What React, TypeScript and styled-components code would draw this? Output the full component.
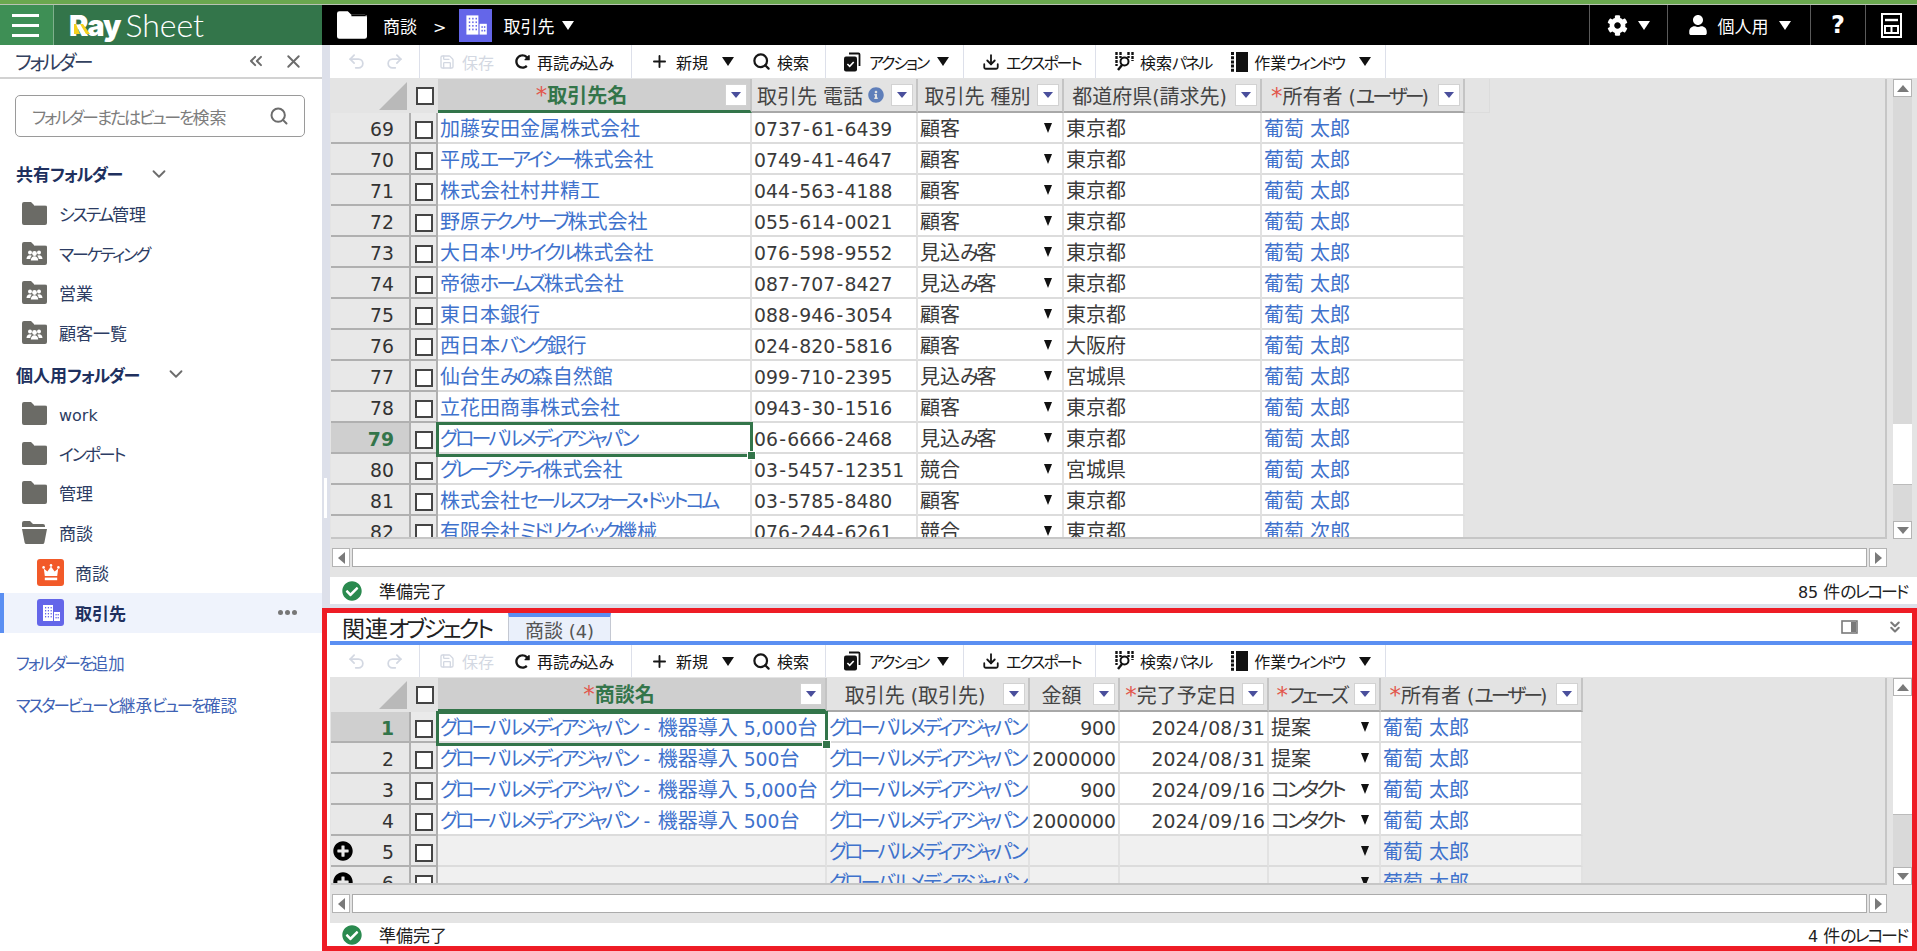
import React from 'react';
import styled, { createGlobalStyle, css } from 'styled-components';
import { ChevronDown, ChevronsLeft, ChevronsDown, X, Search, Plus, Download, Undo2, Redo2, Save } from 'lucide-react';
import { FaCog, FaUser, FaRedoAlt, FaCheckCircle, FaPlusCircle, FaInfoCircle } from 'react-icons/fa';

const JP = '"Noto Sans CJK JP", "Noto Sans", sans-serif';
const GREEN = '#33754a';
const LINK = '#3f72cc';
const BLUE_LINE = '#5b8ff2';

const GlobalStyle = createGlobalStyle`
	html, body {
		margin: 0;
		height: 951px;
		overflow: hidden;
		background: #ffffff;
	}
	body {
		font-family: ${JP};
		font-feature-settings: 'palt';
		color: #333333;
	}
	* {
		box-sizing: border-box;
	}
`;

/* Meiryo UI has narrow kana and Verdana-like latin, so runs are split to get close to it */
const Kana = styled.span`
	letter-spacing: var(--kana-spacing, -0.13em);
`;
const Latin = styled.span`
	font-family: 'DejaVu Sans', sans-serif;
	font-size: 0.94em;
	white-space: pre;
`;
const Punct = styled.span`
	margin: 0 0.07em;
`;

const Txt = ({ children }: { children: string }) => {
	const runs = children.match(/[\u3040-\u30FF]+|[\x20-\x7E]+|[^\u3040-\u30FF\x20-\x7E]+/g) || [];
	return (
		<span>
			{runs.map((run, i) => {
				if (/^[\u3040-\u30FF]/.test(run)) return <Kana key={i}>{run}</Kana>;
				if (/^[\x20-\x7E]/.test(run))
					return (
						<Latin key={i}>
							{run.split(/([-/])/).map((part, j) => (part === '-' || part === '/' ? <Punct key={j}>{part}</Punct> : part))}
						</Latin>
					);
				return <span key={i}>{run}</span>;
			})}
		</span>
	);
};

const Page = styled.div`
	width: 1917px;
	height: 951px;
	display: flex;
	flex-direction: column;
	overflow: hidden;
`;

const TopStripe = styled.div`
	height: 5px;
	flex: none;
	background: #6aa84f;
	border-bottom: 1px solid #b9c2b4;
`;

const Header = styled.header`
	height: 40px;
	flex: none;
	display: flex;
	background: #000000;
	color: #ffffff;
	font-size: 17px;
`;

const Hamburger = styled.div`
	width: 54px;
	display: flex;
	flex-direction: column;
	justify-content: center;
	gap: 7px;
	padding: 0 14px 0 12px;
	background: #3e8f55;
	border-right: 1px solid #7fb08d;
`;

const HamburgerBar = styled.span`
	display: block;
	height: 3px;
	background: #ffffff;
`;

const LogoArea = styled.div`
	width: 268px;
	display: flex;
	align-items: center;
	padding-left: 15px;
	background: ${GREEN};
`;

const LogoRay = styled.span`
	position: relative;
	font-family: Inter, sans-serif;
	font-weight: 900;
	font-size: 29px;
	line-height: 1;
	letter-spacing: -1px;
`;

const LogoWedge = styled.svg`
	position: absolute;
	left: 5px;
	top: 13px;
`;

const LogoSheet = styled.span`
	margin-left: 5px;
	font-family: Lato, sans-serif;
	font-weight: 300;
	font-size: 32px;
	line-height: 1;
`;

const Crumbs = styled.div`
	display: flex;
	align-items: center;
	padding-left: 15px;
`;

const CrumbText = styled.span<{ $ml: number }>`
	margin-left: ${(p) => p.$ml}px;
`;

const Tile = styled.span<{ $color: string; $size: number }>`
	flex: none;
	display: flex;
	align-items: center;
	justify-content: center;
	width: ${(p) => p.$size}px;
	height: ${(p) => p.$size}px;
	border-radius: 3px;
	background: ${(p) => p.$color};
	color: #ffffff;
`;

const CrumbTile = styled(Tile)`
	margin-left: 13px;
	border-radius: 0;
`;

const HeaderRight = styled.div`
	margin-left: auto;
	display: flex;
`;

const HeaderButton = styled.div<{ $width: number }>`
	width: ${(p) => p.$width}px;
	display: flex;
	align-items: center;
	justify-content: center;
	gap: 10px;
	border-left: 1px solid #5a5a5a;
`;

const HelpMark = styled.span`
	font-family: 'DejaVu Sans', sans-serif;
	font-size: 24px;
	font-weight: 700;
`;

const Tri = styled.span<{ $dir?: 'up' | 'down' | 'left' | 'right'; $w: number; $h: number; $color: string; $ml?: number }>`
	flex: none;
	display: inline-block;
	width: 0;
	height: 0;
	margin-left: ${(p) => p.$ml ?? 0}px;
	${({ $dir = 'down', $w, $h, $color }) => {
		if ($dir === 'down')
			return css`
				border-left: ${$w / 2}px solid transparent;
				border-right: ${$w / 2}px solid transparent;
				border-top: ${$h}px solid ${$color};
			`;
		if ($dir === 'up')
			return css`
				border-left: ${$w / 2}px solid transparent;
				border-right: ${$w / 2}px solid transparent;
				border-bottom: ${$h}px solid ${$color};
			`;
		if ($dir === 'left')
			return css`
				border-top: ${$w / 2}px solid transparent;
				border-bottom: ${$w / 2}px solid transparent;
				border-right: ${$h}px solid ${$color};
			`;
		return css`
			border-top: ${$w / 2}px solid transparent;
			border-bottom: ${$w / 2}px solid transparent;
			border-left: ${$h}px solid ${$color};
		`;
	}}
`;

const Body = styled.div`
	position: relative;
	flex: 1;
	display: flex;
	min-height: 0;
`;

const Sidebar = styled.aside`
	width: 322px;
	flex: none;
	background: #ffffff;
	color: #2c3c63;
	font-size: 17px;
`;

const SideTitle = styled.div`
	height: 34px;
	display: flex;
	align-items: center;
	padding: 0 18px 0 15px;
	border-bottom: 2px solid #d2d2d2;
	font-size: 20px;
	color: #33415f;
`;

const SideTitleText = styled.span`
	flex: 1;
`;

const SideTitleIcons = styled.span`
	display: flex;
	align-items: center;
	gap: 17px;
	color: #6c6c6c;
`;

const SearchBox = styled.div`
	height: 42px;
	margin: 16px 17px 17px 15px;
	display: flex;
	align-items: center;
	padding: 0 15px 0 16px;
	border: 1px solid #9a9a9a;
	border-radius: 5px;
	color: #7d7d7d;
`;

const SearchHint = styled.span`
	flex: 1;
`;

const PersonalSection = styled.div`
	--row-lift: 3px;
	margin-top: 3.5px;
`;

const SectionHead = styled.div`
	--kana-spacing: -0.08em;
	height: 39.8px;
	display: flex;
	align-items: center;
	gap: 26px;
	padding: 0 0 var(--row-lift, 0) 16px;
	font-weight: 700;
	color: #20305e;
`;

const FolderRow = styled.div<{ $nested?: boolean; $active?: boolean }>`
	height: 39.6px;
	display: flex;
	align-items: center;
	gap: ${(p) => (p.$nested ? 11 : 12)}px;
	padding-left: ${(p) => (p.$nested ? 37 : 22)}px;
	padding-bottom: var(--row-lift, 0);
	${(p) =>
		p.$active &&
		css`
			background: #eff3fc;
			border-left: 4px solid ${BLUE_LINE};
			padding-left: 33px;
			padding-bottom: 1px;
			font-weight: 700;
			color: #20305e;
		`}
`;

const RowMenu = styled.span`
	margin-left: auto;
	margin-right: 25px;
	display: flex;
	gap: 2px;
`;

const RowMenuDot = styled.i`
	width: 5px;
	height: 5px;
	border-radius: 50%;
	background: #777777;
`;

const SideLink = styled.div<{ $first?: boolean }>`
	height: 42px;
	display: flex;
	align-items: center;
	padding-left: 16px;
	margin-top: ${(p) => (p.$first ? 9 : 0)}px;
	color: #3e62b4;
	font-size: 16.5px;
`;

const RightColumn = styled.div`
	flex: 1;
	min-width: 0;
	display: flex;
	flex-direction: column;
	background: #dde0ea;
`;

const TopPane = styled.section`
	height: 559px;
	flex: none;
	margin: 0 0 4px 8px;
	display: flex;
	flex-direction: column;
	background: #ffffff;
`;

const SplitterGrip = styled.div`
	position: absolute;
	left: 324px;
	top: 433px;
	width: 3px;
	height: 40px;
	background: #ffffff;
`;

const RelatedPane = styled.section`
	flex: 1;
	min-height: 0;
	display: flex;
	flex-direction: column;
	border: 5px solid #ee1c25;
	padding-left: 3px;
	background: #ffffff;
`;

const TabRow = styled.div`
	height: 32px;
	flex: none;
	display: flex;
	align-items: stretch;
	padding-left: 12px;
	border-bottom: 4px solid ${BLUE_LINE};
`;

const TabTitle = styled.div`
	width: 166px;
	display: flex;
	align-items: center;
	font-size: 23px;
	color: #222222;
`;

const Tab = styled.div`
	width: 103px;
	display: flex;
	align-items: center;
	justify-content: center;
	border-top: 4px solid ${BLUE_LINE};
	border-left: 1px solid #c4c8d2;
	border-right: 1px solid #c4c8d2;
	background: #eaf0fb;
	color: #555555;
	font-size: 19px;
`;

const TabTools = styled.div`
	margin-left: auto;
	display: flex;
	align-items: center;
	gap: 28px;
	padding-right: 8px;
	color: #7a7a7a;
`;

const Toolbar = styled.div<{ $height: number }>`
	height: ${(p) => p.$height}px;
	flex: none;
	display: flex;
	background: #ffffff;
	font-size: 16px;
	color: #161616;
`;

const ToolGroup = styled.div<{ $width: number; $pad: number }>`
	width: ${(p) => p.$width}px;
	flex: none;
	display: flex;
	align-items: center;
	padding-left: ${(p) => p.$pad}px;
	border-right: 1px solid #dde0ea;
	white-space: nowrap;
`;

const ToolItem = styled.span<{ $ml?: number; $gap?: number; $disabled?: boolean }>`
	display: inline-flex;
	align-items: center;
	gap: ${(p) => p.$gap ?? 7}px;
	margin-left: ${(p) => p.$ml ?? 0}px;
	color: ${(p) => (p.$disabled ? '#d3d8e2' : 'inherit')};
`;

const GridArea = styled.div<{ $height: number; $narrow?: boolean }>`
	height: ${(p) => p.$height}px;
	flex: none;
	display: flex;
	flex-direction: column;
	padding: 1px ${(p) => (p.$narrow ? 0 : 5)}px 0 1px;
	background: #e4e4e4;
`;

const GridRow = styled.div`
	display: flex;
	flex: 1;
	min-height: 0;
`;

const Viewport = styled.div`
	--kana-spacing: -0.15em;
	flex: 1;
	min-width: 0;
	overflow: hidden;
	border-right: 2px solid #c6c6c6;
	border-bottom: 2px solid #c6c6c6;
	font-size: 20px;
	white-space: nowrap;
`;

const HeadRow = styled.div`
	display: flex;
	height: 34px;
`;

const Corner = styled.div`
	width: 80px;
	height: 34px;
	flex: none;
	display: flex;
	align-items: flex-end;
	justify-content: flex-end;
	padding: 0 4px 3px 0;
	background: #e4e4e4;
`;

const CheckHead = styled.div`
	width: 27px;
	flex: none;
	display: flex;
	align-items: center;
	justify-content: center;
	background: #e4e4e4;
`;

const Check = styled.span<{ $low?: boolean }>`
	display: block;
	width: 18px;
	height: 18px;
	margin-top: ${(p) => (p.$low ? 8 : 0)}px;
	margin-left: 1px;
	border: 2px solid #444444;
	background: #ffffff;
`;

const HeadCell = styled.div<{ $width: number; $active?: boolean }>`
	width: ${(p) => p.$width}px;
	flex: none;
	display: flex;
	align-items: center;
	padding-right: 3px;
	background: ${(p) => (p.$active ? '#cfcfcf' : '#e3e3e3')};
	border-right: 2px solid #c4c4c4;
	border-bottom: ${(p) => (p.$active ? `3px solid ${GREEN}` : '2px solid #a8a8a8')};
	color: ${(p) => (p.$active ? GREEN : '#444444')};
	font-weight: ${(p) => (p.$active ? 700 : 400)};
`;

const HeadLabel = styled.span`
	flex: 1;
	min-width: 0;
	text-align: center;
	overflow: hidden;
`;

const Star = styled.span`
	color: #e2574c;
	font-family: 'DejaVu Sans', sans-serif;
	font-size: 1.15em;
	font-weight: 400;
	line-height: 1;
`;

const InfoMark = styled.span`
	display: flex;
	margin-right: 7px;
	color: #5f7fba;
`;

const FilterButton = styled.span`
	flex: none;
	width: 22px;
	height: 22px;
	display: flex;
	align-items: center;
	justify-content: center;
	background: #ffffff;
	border: 1px solid #d2d2d2;
`;

const HeadFiller = styled.div`
	width: 25px;
	flex: none;
	border-right: 1px solid #dcdcdc;
	border-bottom: 1px solid #dcdcdc;
`;

const DataRow = styled.div`
	display: flex;
	height: 31px;
`;

const RowHead = styled.div<{ $active?: boolean }>`
	position: relative;
	width: 80px;
	flex: none;
	padding-right: 15px;
	text-align: right;
	line-height: 29px;
	background: ${(p) => (p.$active ? '#cfcfcf' : '#e8e8e8')};
	border-right: 2px solid #b0b0b0;
	border-bottom: 2px solid #b0b0b0;
	color: ${(p) => (p.$active ? GREEN : '#333333')};
	font-weight: ${(p) => (p.$active ? 700 : 400)};
`;

const AddMark = styled.span`
	position: absolute;
	left: 2px;
	top: 5px;
	display: flex;
	color: #000000;
`;

const CheckCell = styled.div`
	width: 27px;
	flex: none;
	display: flex;
	justify-content: center;
	background: #eaeaea;
	border-right: 2px solid #b0b0b0;
	border-bottom: 2px solid #b0b0b0;
`;

const Cell = styled.div<{ $width: number; $kind: string; $blank?: boolean; $selected?: boolean }>`
	position: relative;
	z-index: ${(p) => (p.$selected ? 2 : 0)};
	width: ${(p) => p.$width}px;
	flex: none;
	display: flex;
	align-items: center;
	padding: 0 2px;
	overflow: ${(p) => (p.$selected ? 'visible' : 'hidden')};
	background: ${(p) => (p.$blank ? '#f0f0f0' : '#ffffff')};
	border-right: 2px solid #e2e2e2;
	border-bottom: 2px solid #dcdcdc;
	color: ${(p) => (p.$kind === 'link' ? LINK : '#3a3a3a')};
	justify-content: ${(p) => (p.$kind === 'right' ? 'flex-end' : 'flex-start')};
`;

const SelectText = styled.span`
	flex: 1;
	min-width: 0;
`;

const SelectArrow = styled(Tri)`
	margin-right: 8px;
`;

const SelectionFrame = styled.span`
	position: absolute;
	left: -2px;
	top: -1px;
	right: -3px;
	bottom: -5px;
	border: 3px solid ${GREEN};
	pointer-events: none;
`;

const SelectionHandle = styled.span`
	position: absolute;
	right: -6px;
	bottom: -6px;
	width: 9px;
	height: 9px;
	background: ${GREEN};
	border: 1px solid #ffffff;
`;

const VScroll = styled.div`
	width: 25px;
	flex: none;
	display: flex;
	flex-direction: column;
	padding-left: 6px;
`;

const VTrack = styled.div`
	flex: 1;
	min-height: 0;
	display: flex;
	flex-direction: column;
	background: #d9d9d9;
`;

const Thumb = styled.div<{ $top: number; $height: number }>`
	margin-top: ${(p) => p.$top}px;
	height: ${(p) => p.$height}px;
	flex: none;
	background: #ffffff;
	border-bottom: 1px solid #bbbbbb;
`;

const ScrollButton = styled.span<{ $wide?: boolean }>`
	flex: none;
	width: ${(p) => (p.$wide ? 19 : 18)}px;
	height: ${(p) => (p.$wide ? 18 : 19)}px;
	display: flex;
	align-items: center;
	justify-content: center;
	background: #ffffff;
	border: 1px solid #b4b4b4;
`;

const HScroll = styled.div`
	height: 19px;
	flex: none;
	margin: 9px 25px 10px 1px;
	display: flex;
	gap: 2px;
`;

const HTrack = styled.div`
	flex: 1;
	background: #ffffff;
	border: 1px solid #ababab;
`;

const StatusBar = styled.div<{ $height: number; $right: number }>`
	height: ${(p) => p.$height}px;
	flex: none;
	display: flex;
	align-items: center;
	padding: 0 ${(p) => p.$right}px 0 12px;
	background: #ffffff;
	font-size: 17px;
	color: #222222;
`;

const StatusMark = styled.span`
	display: flex;
	margin-right: 17px;
	color: #2a8a4f;
`;

const StatusCount = styled.span`
	margin-left: auto;
`;

type Column = { label: string; width: number; kind: string; required?: boolean; info?: boolean; active?: boolean };

const ACCOUNT_COLUMNS: Column[] = [
	{ label: '取引先名', width: 314, kind: 'link', required: true, active: true },
	{ label: '取引先 電話', width: 166, kind: 'text', info: true },
	{ label: '取引先 種別', width: 146, kind: 'select' },
	{ label: '都道府県(請求先)', width: 198, kind: 'text' },
	{ label: '所有者 (ユーザー)', width: 203, kind: 'link', required: true },
];

const ACCOUNT_ROWS: string[][] = [
	['加藤安田金属株式会社', '0737-61-6439', '顧客', '東京都', '葡萄 太郎'],
	['平成エーアイシー株式会社', '0749-41-4647', '顧客', '東京都', '葡萄 太郎'],
	['株式会社村井精工', '044-563-4188', '顧客', '東京都', '葡萄 太郎'],
	['野原テクノサーブ株式会社', '055-614-0021', '顧客', '東京都', '葡萄 太郎'],
	['大日本リサイクル株式会社', '076-598-9552', '見込み客', '東京都', '葡萄 太郎'],
	['帝徳ホームズ株式会社', '087-707-8427', '見込み客', '東京都', '葡萄 太郎'],
	['東日本銀行', '088-946-3054', '顧客', '東京都', '葡萄 太郎'],
	['西日本バンク銀行', '024-820-5816', '顧客', '大阪府', '葡萄 太郎'],
	['仙台生みの森自然館', '099-710-2395', '見込み客', '宮城県', '葡萄 太郎'],
	['立花田商事株式会社', '0943-30-1516', '顧客', '東京都', '葡萄 太郎'],
	['グローバルメディアジャパン', '06-6666-2468', '見込み客', '東京都', '葡萄 太郎'],
	['グレープシティ株式会社', '03-5457-12351', '競合', '宮城県', '葡萄 太郎'],
	['株式会社セールスフォース・ドットコム', '03-5785-8480', '顧客', '東京都', '葡萄 太郎'],
	['有限会社ミドリクイック機械', '076-244-6261', '競合', '東京都', '葡萄 次郎'],
];

const DEAL_COLUMNS: Column[] = [
	{ label: '商談名', width: 389, kind: 'link', required: true, active: true },
	{ label: '取引先 (取引先)', width: 203, kind: 'link' },
	{ label: '金額', width: 90, kind: 'right' },
	{ label: '完了予定日', width: 149, kind: 'right', required: true },
	{ label: 'フェーズ', width: 112, kind: 'select', required: true },
	{ label: '所有者 (ユーザー)', width: 202, kind: 'link', required: true },
];

const GLOBAL_MEDIA = 'グローバルメディアジャパン';
const TARO = '葡萄 太郎';

const DEAL_ROWS: string[][] = [
	[`${GLOBAL_MEDIA} - 機器導入 5,000台`, GLOBAL_MEDIA, '900', '2024/08/31', '提案', TARO],
	[`${GLOBAL_MEDIA} - 機器導入 500台`, GLOBAL_MEDIA, '2000000', '2024/08/31', '提案', TARO],
	[`${GLOBAL_MEDIA} - 機器導入 5,000台`, GLOBAL_MEDIA, '900', '2024/09/16', 'コンタクト', TARO],
	[`${GLOBAL_MEDIA} - 機器導入 500台`, GLOBAL_MEDIA, '2000000', '2024/09/16', 'コンタクト', TARO],
	['', GLOBAL_MEDIA, '', '', '', TARO],
	['', GLOBAL_MEDIA, '', '', '', TARO],
];

const FolderIcon = ({ color = '#6b6b66', w = 25, h = 23, people = false }: { color?: string; w?: number; h?: number; people?: boolean }) => (
	<svg width={w} height={h} viewBox="0 0 25 23">
		<path d="M0 2a2 2 0 0 1 2-2h7l3 3h11a2 2 0 0 1 2 2v16a2 2 0 0 1-2 2H2a2 2 0 0 1-2-2z" fill={color} />
		<path d="M12 3.2h13" stroke="#ffffff" strokeOpacity={color === '#ffffff' ? 0 : 1} strokeWidth="0.9" />
		{color === '#ffffff' && <path d="M12 3.6h12" stroke="#000000" strokeWidth="1.2" />}
		{people && (
			<g fill="#ffffff">
				<circle cx="8" cy="10.5" r="2" />
				<circle cx="17" cy="10.5" r="2" />
				<circle cx="12.5" cy="11.5" r="2.4" />
				<path d="M4.5 17c0-2.4 1.4-3.8 3.5-3.8 .8 0 1.4.2 1.9.5-1 .8-1.5 2-1.6 3.3zM20.5 17c0-2.4-1.4-3.8-3.5-3.8-.8 0-1.4.2-1.9.5 1 .8 1.5 2 1.6 3.3z" />
				<path d="M8.8 18.5c0-2.6 1.5-4.2 3.7-4.2s3.7 1.6 3.7 4.2z" />
			</g>
		)}
	</svg>
);

const OpenFolderIcon = () => (
	<svg width="25" height="23" viewBox="0 0 25 23">
		<path d="M0 2a2 2 0 0 1 2-2h6l3 3h10a2 2 0 0 1 2 2v1H0z" fill="#6b6b66" />
		<path d="M0 8h25l-2.6 13.4a2 2 0 0 1-2 1.6H4.6a2 2 0 0 1-2-1.6z" fill="#6b6b66" />
	</svg>
);

const CrownIcon = () => (
	<svg width="18" height="17" viewBox="0 0 18 17" fill="#ffffff">
		<circle cx="1.6" cy="3.4" r="1.3" />
		<circle cx="9" cy="1.4" r="1.3" />
		<circle cx="16.4" cy="3.4" r="1.3" />
		<path d="M1.8 4.4l3.6 3.2L9 2.4l3.6 5.2 3.6-3.2-1 7.6H2.8z" />
		<rect x="2.8" y="13.6" width="12.4" height="2.6" />
	</svg>
);

const BuildingIcon = ({ color, size }: { color: string; size: number }) => (
	<svg width={size} height={size} viewBox="0 0 20 20">
		<rect x="2" y="2" width="10" height="16" fill="#ffffff" />
		<rect x="13" y="9" width="6" height="9" fill="#ffffff" />
		{[4, 6.8, 9.6].map((x) =>
			[4, 7, 10, 13].map((y) => <rect key={`${x}-${y}`} x={x} y={y} width="1.2" height="1.4" fill={color} />),
		)}
		{[14.5, 16.6].map((x) =>
			[11, 14].map((y) => <rect key={`${x}-${y}`} x={x} y={y} width="1.2" height="1.4" fill={color} />),
		)}
	</svg>
);

const ActionIcon = () => (
	<svg width="17" height="20" viewBox="0 0 17 20">
		<path d="M5 1.5h9.5a1 1 0 0 1 1 1V14" fill="none" stroke="#111111" strokeWidth="1.8" />
		<rect x="0" y="4.5" width="13" height="15" rx="2" fill="#111111" />
		<path d="M3.4 12l2.3 2.4 4-4.4" fill="none" stroke="#ffffff" strokeWidth="1.6" />
	</svg>
);

const PanelIcon = () => (
	<svg width="19" height="20" viewBox="0 0 19 20">
		<path d="M1.5 0v14M5.5 0v6M13.5 0v6M17.5 0v9" stroke="#111111" strokeWidth="2.4" strokeDasharray="3 1" />
		<circle cx="9.5" cy="9.5" r="4" fill="none" stroke="#111111" strokeWidth="2" />
		<path d="M7 13l-4 5" stroke="#111111" strokeWidth="2.4" />
	</svg>
);

const WindowIcon = () => (
	<svg width="17" height="20" viewBox="0 0 17 20">
		<rect x="5" y="0" width="12" height="20" fill="#111111" />
		<path d="M1.5 0v20" stroke="#111111" strokeWidth="3" strokeDasharray="3 1.2" />
	</svg>
);

const LayoutIcon = () => (
	<svg width="21" height="25" viewBox="0 0 21 25" fill="none" stroke="#ffffff" strokeWidth="2">
		<rect x="1" y="1" width="19" height="23" />
		<path d="M4 7h13" strokeWidth="2.4" />
		<path d="M4 13h13v7H4z" />
		<path d="M10.5 13v7" />
	</svg>
);

const SplitIcon = () => (
	<svg width="17" height="14" viewBox="0 0 17 14">
		<rect x="1" y="1" width="15" height="12" fill="#ffffff" stroke="#7a7a7a" strokeWidth="1.6" />
		<rect x="10" y="2" width="5" height="10" fill="#7a7a7a" />
	</svg>
);

const Filter = () => (
	<FilterButton>
		<Tri $w={10} $h={6} $color="#4a4f9c" />
	</FilterButton>
);

const ViewToolbar = ({ height }: { height: number }) => (
	<Toolbar $height={height}>
		<ToolGroup $width={90} $pad={17}>
			<ToolItem $disabled>
				<Undo2 size={19} strokeWidth={2.2} />
			</ToolItem>
			<ToolItem $disabled $ml={19}>
				<Redo2 size={19} strokeWidth={2.2} />
			</ToolItem>
		</ToolGroup>
		<ToolGroup $width={212} $pad={19}>
			<ToolItem $disabled>
				<Save size={16} strokeWidth={2} />
				<Txt>保存</Txt>
			</ToolItem>
			<ToolItem $ml={21}>
				<FaRedoAlt size={15} />
				<Txt>再読み込み</Txt>
			</ToolItem>
		</ToolGroup>
		<ToolGroup $width={194} $pad={18}>
			<ToolItem>
				<Plus size={19} strokeWidth={2.4} />
				<Txt>新規</Txt>
			</ToolItem>
			<Tri $w={12} $h={9} $color="#111111" $ml={14} />
			<ToolItem $ml={18} $gap={6}>
				<Search size={19} strokeWidth={2.8} />
				<Txt>検索</Txt>
			</ToolItem>
		</ToolGroup>
		<ToolGroup $width={138} $pad={18}>
			<ToolItem $gap={8}>
				<ActionIcon />
				<Txt>アクション</Txt>
			</ToolItem>
			<Tri $w={12} $h={9} $color="#111111" $ml={9} />
		</ToolGroup>
		<ToolGroup $width={132} $pad={18}>
			<ToolItem $gap={6}>
				<Download size={18} strokeWidth={2.4} />
				<Txt>エクスポート</Txt>
			</ToolItem>
		</ToolGroup>
		<ToolGroup $width={290} $pad={19}>
			<ToolItem $gap={6}>
				<PanelIcon />
				<Txt>検索パネル</Txt>
			</ToolItem>
			<ToolItem $ml={20} $gap={6}>
				<WindowIcon />
				<Txt>作業ウィンドウ</Txt>
			</ToolItem>
			<Tri $w={12} $h={9} $color="#111111" $ml={15} />
		</ToolGroup>
	</Toolbar>
);

const HeadCells = ({ columns }: { columns: Column[] }) => (
	<>
		{columns.map((col) => (
			<HeadCell key={col.label} $width={col.width} $active={col.active}>
				<HeadLabel>
					{col.required && <Star>*</Star>}
					<Txt>{col.label}</Txt>
				</HeadLabel>
				{col.info && (
					<InfoMark>
						<FaInfoCircle size={16} />
					</InfoMark>
				)}
				<Filter />
			</HeadCell>
		))}
	</>
);

const Grid = ({
	columns,
	rows,
	startNumber,
	activeRow,
	blankFrom,
	filler,
}: {
	columns: Column[];
	rows: string[][];
	startNumber: number;
	activeRow: number;
	blankFrom?: number;
	filler?: boolean;
}) => (
	<Viewport>
		<HeadRow>
			<Corner>
				<svg width="28" height="28" viewBox="0 0 28 28">
					<path d="M28 0v28H0z" fill="#b9b9b9" />
				</svg>
			</Corner>
			<CheckHead>
				<Check />
			</CheckHead>
			<HeadCells columns={columns} />
			{filler && <HeadFiller />}
		</HeadRow>
		{rows.map((row, r) => {
			const blank = blankFrom !== undefined && r >= blankFrom;
			return (
				<DataRow key={r}>
					<RowHead $active={r === activeRow}>
						{blank && (
							<AddMark>
								<FaPlusCircle size={20} />
							</AddMark>
						)}
						<Txt>{String(startNumber + r)}</Txt>
					</RowHead>
					<CheckCell>
						<Check $low />
					</CheckCell>
					{columns.map((col, c) => {
						const selected = r === activeRow && c === 0;
						return (
							<Cell key={col.label} $width={col.width} $kind={col.kind} $blank={blank} $selected={selected}>
								{col.kind === 'select' ? (
									<>
										<SelectText>
											<Txt>{row[c]}</Txt>
										</SelectText>
										<SelectArrow $w={8} $h={10} $color="#111111" />
									</>
								) : (
									<Txt>{row[c]}</Txt>
								)}
								{selected && (
									<SelectionFrame>
										<SelectionHandle />
									</SelectionFrame>
								)}
							</Cell>
						);
					})}
				</DataRow>
			);
		})}
	</Viewport>
);

const VerticalScrollbar = ({ top, height }: { top: number; height: number }) => (
	<VScroll>
		<ScrollButton $wide>
			<Tri $dir="up" $w={12} $h={7} $color="#7a7a7a" />
		</ScrollButton>
		<VTrack>
			<Thumb $top={top} $height={height} />
		</VTrack>
		<ScrollButton $wide>
			<Tri $w={12} $h={7} $color="#7a7a7a" />
		</ScrollButton>
	</VScroll>
);

const HorizontalScrollbar = () => (
	<HScroll>
		<ScrollButton>
			<Tri $dir="left" $w={12} $h={7} $color="#7a7a7a" />
		</ScrollButton>
		<HTrack />
		<ScrollButton>
			<Tri $dir="right" $w={12} $h={7} $color="#7a7a7a" />
		</ScrollButton>
	</HScroll>
);

const Status = ({ height, right, count }: { height: number; right: number; count: string }) => (
	<StatusBar $height={height} $right={right}>
		<StatusMark>
			<FaCheckCircle size={20} />
		</StatusMark>
		<Txt>準備完了</Txt>
		<StatusCount>
			<Txt>{count}</Txt>
		</StatusCount>
	</StatusBar>
);

const App = () => (
	<Page>
		<GlobalStyle />
		<TopStripe />
		<Header>
			<Hamburger>
				<HamburgerBar />
				<HamburgerBar />
				<HamburgerBar />
			</Hamburger>
			<LogoArea>
				<LogoRay>
					Ray
					<LogoWedge width="16" height="10" viewBox="0 0 16 10">
						<path d="M0 10h6L2 0H0zM6 0l6 10h4L9 0z" fill="#f5d21f" />
					</LogoWedge>
				</LogoRay>
				<LogoSheet>Sheet</LogoSheet>
			</LogoArea>
			<Crumbs>
				<FolderIcon color="#ffffff" w={30} h={28} />
				<CrumbText $ml={16}>
					<Txt>商談</Txt>
				</CrumbText>
				<CrumbText $ml={16}>
					<Txt>&gt;</Txt>
				</CrumbText>
				<CrumbTile $color="#6466e9" $size={33}>
					<BuildingIcon color="#6466e9" size={24} />
				</CrumbTile>
				<CrumbText $ml={11}>
					<Txt>取引先</Txt>
				</CrumbText>
				<Tri $w={12} $h={9} $color="#ffffff" $ml={8} />
			</Crumbs>
			<HeaderRight>
				<HeaderButton $width={78}>
					<FaCog size={21} />
					<Tri $w={12} $h={9} $color="#ffffff" />
				</HeaderButton>
				<HeaderButton $width={143}>
					<FaUser size={20} />
					<Txt>個人用</Txt>
					<Tri $w={12} $h={9} $color="#ffffff" />
				</HeaderButton>
				<HeaderButton $width={55}>
					<HelpMark>?</HelpMark>
				</HeaderButton>
				<HeaderButton $width={52}>
					<LayoutIcon />
				</HeaderButton>
			</HeaderRight>
		</Header>
		<Body>
			<Sidebar>
				<SideTitle>
					<SideTitleText>
						<Txt>フォルダー</Txt>
					</SideTitleText>
					<SideTitleIcons>
						<ChevronsLeft size={20} strokeWidth={2.4} />
						<X size={21} strokeWidth={2.2} />
					</SideTitleIcons>
				</SideTitle>
				<SearchBox>
					<SearchHint>
						<Txt>フォルダーまたはビューを検索</Txt>
					</SearchHint>
					<Search size={20} strokeWidth={2.4} color="#6c6c6c" />
				</SearchBox>
				<SectionHead>
					<Txt>共有フォルダー</Txt>
					<ChevronDown size={22} strokeWidth={2} color="#6c6c6c" />
				</SectionHead>
				<FolderRow>
					<FolderIcon />
					<Txt>システム管理</Txt>
				</FolderRow>
				<FolderRow>
					<FolderIcon people />
					<Txt>マーケティング</Txt>
				</FolderRow>
				<FolderRow>
					<FolderIcon people />
					<Txt>営業</Txt>
				</FolderRow>
				<FolderRow>
					<FolderIcon people />
					<Txt>顧客一覧</Txt>
				</FolderRow>
				<PersonalSection>
					<SectionHead>
						<Txt>個人用フォルダー</Txt>
						<ChevronDown size={22} strokeWidth={2} color="#6c6c6c" />
					</SectionHead>
					<FolderRow>
						<FolderIcon />
						<Txt>work</Txt>
					</FolderRow>
					<FolderRow>
						<FolderIcon />
						<Txt>インポート</Txt>
					</FolderRow>
					<FolderRow>
						<FolderIcon />
						<Txt>管理</Txt>
					</FolderRow>
					<FolderRow>
						<OpenFolderIcon />
						<Txt>商談</Txt>
					</FolderRow>
					<FolderRow $nested>
						<Tile $color="#f25a29" $size={27}>
							<CrownIcon />
						</Tile>
						<Txt>商談</Txt>
					</FolderRow>
					<FolderRow $nested $active>
						<Tile $color="#6466e9" $size={27}>
							<BuildingIcon color="#6466e9" size={20} />
						</Tile>
						<Txt>取引先</Txt>
						<RowMenu>
							<RowMenuDot />
							<RowMenuDot />
							<RowMenuDot />
						</RowMenu>
					</FolderRow>
				</PersonalSection>
				<SideLink $first>
					<Txt>フォルダーを追加</Txt>
				</SideLink>
				<SideLink>
					<Txt>マスタービューと継承ビューを確認</Txt>
				</SideLink>
			</Sidebar>
			<SplitterGrip />
			<RightColumn>
				<TopPane>
					<ViewToolbar height={33} />
					<GridArea $height={499}>
						<GridRow>
							<Grid columns={ACCOUNT_COLUMNS} rows={ACCOUNT_ROWS} startNumber={69} activeRow={10} filler />
							<VerticalScrollbar top={327} height={61} />
						</GridRow>
						<HorizontalScrollbar />
					</GridArea>
					<Status height={27} right={10} count="85 件のレコード" />
				</TopPane>
				<RelatedPane>
					<TabRow>
						<TabTitle>
							<Txt>関連オブジェクト</Txt>
						</TabTitle>
						<Tab>
							<Txt>商談 (4)</Txt>
						</Tab>
						<TabTools>
							<SplitIcon />
							<ChevronsDown size={18} strokeWidth={2.8} />
						</TabTools>
					</TabRow>
					<ViewToolbar height={32} />
					<GridArea $height={246} $narrow>
						<GridRow>
							<Grid columns={DEAL_COLUMNS} rows={DEAL_ROWS} startNumber={1} activeRow={0} blankFrom={4} />
							<VerticalScrollbar top={0} height={119} />
						</GridRow>
						<HorizontalScrollbar />
					</GridArea>
					<Status height={23} right={5} count="4 件のレコード" />
				</RelatedPane>
			</RightColumn>
		</Body>
	</Page>
);

export default App;
